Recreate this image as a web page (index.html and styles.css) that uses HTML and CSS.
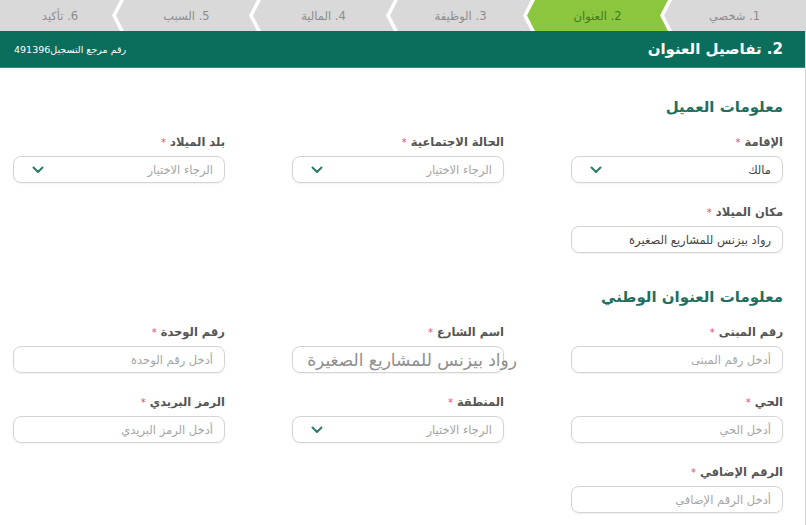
FILE: index.html
```html
<!DOCTYPE html>
<html lang="ar" dir="rtl">
<head>
<meta charset="utf-8">
<title>تفاصيل العنوان</title>
<link rel="stylesheet" href="styles.css">
</head>
<body>
<div class="page">
  <nav class="steps">
    <div class="step first">1. شخصي</div>
    <div class="step active">2. العنوان</div>
    <div class="step">3. الوظيفة</div>
    <div class="step">4. المالية</div>
    <div class="step">5. السبب</div>
    <div class="step last">6. تأكيد</div>
  </nav>
  <header class="bar">
    <h1 class="bar-title">2. تفاصيل العنوان</h1>
    <span class="ref">رقم مرجع التسجيل491396</span>
  </header>
  <main class="content">
    <h2 class="section">معلومات العميل</h2>
    <div class="grid">
      <div class="field">
        <label class="label">الإقامة <span class="req">*</span></label>
        <div class="input select value"><span>مالك</span><svg class="chev" width="12" height="8" viewBox="0 0 12 8"><path d="M1.5 1.5 L6 6 L10.5 1.5" fill="none" stroke="#2b7a68" stroke-width="2" stroke-linecap="round" stroke-linejoin="round"/></svg></div>
      </div>
      <div class="field">
        <label class="label">الحالة الاجتماعية <span class="req">*</span></label>
        <div class="input select"><span>الرجاء الاختيار</span><svg class="chev" width="12" height="8" viewBox="0 0 12 8"><path d="M1.5 1.5 L6 6 L10.5 1.5" fill="none" stroke="#2b7a68" stroke-width="2" stroke-linecap="round" stroke-linejoin="round"/></svg></div>
      </div>
      <div class="field">
        <label class="label">بلد الميلاد <span class="req">*</span></label>
        <div class="input select"><span>الرجاء الاختيار</span><svg class="chev" width="12" height="8" viewBox="0 0 12 8"><path d="M1.5 1.5 L6 6 L10.5 1.5" fill="none" stroke="#2b7a68" stroke-width="2" stroke-linecap="round" stroke-linejoin="round"/></svg></div>
      </div>
      <div class="field">
        <label class="label">مكان الميلاد <span class="req">*</span></label>
        <div class="input value"><span>رواد بيزنس للمشاريع الصغيرة</span></div>
      </div>
    </div>

    <h2 class="section second">معلومات العنوان الوطني</h2>
    <div class="grid">
      <div class="field">
        <label class="label">رقم المبنى <span class="req">*</span></label>
        <div class="input"><span>أدخل رقم المبنى</span></div>
      </div>
      <div class="field">
        <label class="label">اسم الشارع <span class="req">*</span></label>
        <div class="input overflow"><span class="big">رواد بيزنس للمشاريع الصغيرة</span></div>
      </div>
      <div class="field">
        <label class="label">رقم الوحدة <span class="req">*</span></label>
        <div class="input"><span>أدخل رقم الوحدة</span></div>
      </div>
      <div class="field">
        <label class="label">الحي <span class="req">*</span></label>
        <div class="input"><span>أدخل الحي</span></div>
      </div>
      <div class="field">
        <label class="label">المنطقة <span class="req">*</span></label>
        <div class="input select"><span>الرجاء الاختيار</span><svg class="chev" width="12" height="8" viewBox="0 0 12 8"><path d="M1.5 1.5 L6 6 L10.5 1.5" fill="none" stroke="#2b7a68" stroke-width="2" stroke-linecap="round" stroke-linejoin="round"/></svg></div>
      </div>
      <div class="field">
        <label class="label">الرمز البريدي <span class="req">*</span></label>
        <div class="input"><span>أدخل الرمز البريدي</span></div>
      </div>
      <div class="field">
        <label class="label">الرقم الإضافي <span class="req">*</span></label>
        <div class="input"><span>أدخل الرقم الإضافي</span></div>
      </div>
    </div>
  </main>
</div>
</body>
</html>
```

FILE: styles.css
```css
* { box-sizing: border-box; }
html, body { margin: 0; padding: 0; background: #fff; }
body {
  font-family: "DejaVu Sans", "Noto Sans", sans-serif;
  direction: rtl;
}
.page {
  width: 806px;
  height: 525px;
  overflow: hidden;
  border-right: 1px solid #d8d8d8;
}
.steps {
  display: flex;
  height: 31px;
  background: #fff;
}
.step {
  flex: 0 0 141px;
  margin-left: -4px;
  background: #d9d9d9;
  color: #8c8c8c;
  font-size: 11.5px;
  display: flex;
  align-items: center;
  justify-content: center;
  clip-path: polygon(0 50%, 8px 0, 100% 0, calc(100% - 8px) 50%, 100% 100%, 8px 100%);
}
.step.first {
  clip-path: polygon(0 50%, 8px 0, 100% 0, 100% 100%, 8px 100%);
}
.step.last {
  flex: 1 1 auto;
  margin-left: 0;
  clip-path: polygon(0 0, 100% 0, calc(100% - 8px) 50%, 100% 100%, 0 100%);
}
.step.active {
  background: #8cc63f;
  color: #3f7a22;
}
.bar {
  height: 37px;
  background: #0b6e5c;
  display: flex;
  align-items: center;
  justify-content: space-between;
  padding: 0 22px 0 14px;
  color: #fff;
  border-bottom: 1px solid #3c8c7c;
}
.bar-title {
  margin: 0;
  font-size: 15px;
  font-weight: bold;
}
.ref {
  font-size: 9.5px;
}
.content {
  padding: 28px 22px 0 14px;
}
.section {
  margin: 0 0 15px;
  height: 22px;
  line-height: 22px;
  font-size: 15px;
  font-weight: bold;
  color: #1f6f60;
}
.section.second {
  margin-top: 33px;
}
.grid {
  display: grid;
  grid-template-columns: repeat(3, 212px);
  column-gap: 67px;
  row-gap: 20px;
}
.label {
  display: block;
  height: 18px;
  line-height: 18px;
  margin-bottom: 5px;
  font-size: 11.5px;
  font-weight: bold;
  color: #555;
}
.req {
  color: #e4506c;
  font-size: 10px;
  font-weight: normal;
}
.input {
  height: 27px;
  border: 1px solid #d4d4d4;
  border-radius: 8px;
  display: flex;
  align-items: center;
  justify-content: space-between;
  padding: 0 11px 0 18px;
  font-size: 11.5px;
  color: #a6a6a6;
  box-shadow: 0 1px 2px rgba(0, 0, 0, 0.06);
  white-space: nowrap;
}
.input.value {
  color: #444;
}
.chev {
  flex: none;
}
.input.overflow {
  overflow: visible;
  padding: 0;
}
.big {
  font-size: 17px;
  color: #8e8e8e;
  margin-right: -14px;
  letter-spacing: 0.5px;
}
```
